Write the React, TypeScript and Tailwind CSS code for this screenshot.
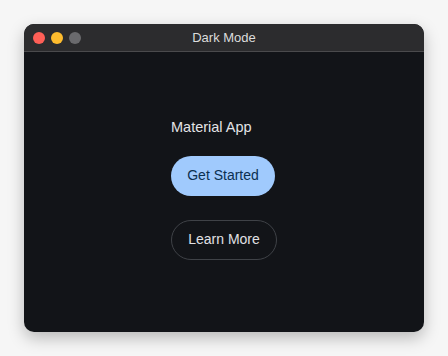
import React from 'react';

const App: React.FC = () => {
  return (
    <div className="w-[448px] h-[356px] bg-[#f6f6f6] pt-6 px-6 font-['Liberation_Sans',Arial,sans-serif]">
      <div className="w-[400px] h-[308px] rounded-[10px] overflow-hidden bg-[#121418] shadow-[0_6px_16px_rgba(0,0,0,0.25)] flex flex-col">
        {/* title bar */}
        <div className="relative h-[28px] bg-[#2c2c2e] border-b border-[#4a4a4c] flex items-center justify-center shrink-0">
          <div className="absolute left-[9px] top-[8px] flex gap-[6px]">
            <span className="w-3 h-3 rounded-full bg-[#fe5f57]" />
            <span className="w-3 h-3 rounded-full bg-[#febc2e]" />
            <span className="w-3 h-3 rounded-full bg-[#6a6a6d]" />
          </div>
          <span className="text-[13px] text-[#dcdcdc]">Dark Mode</span>
        </div>

        {/* content */}
        <div className="flex-1 flex items-center justify-center pb-[6px]">
          <div className="flex flex-col items-start">
            <p className="text-[14.5px] leading-4 text-[#e3e3e6] mb-[21px]">Material App</p>
            <button className="h-10 w-[104px] rounded-full bg-[#a0cafd] text-[14px] text-[#0b3050] mb-6">
              Get Started
            </button>
            <button className="h-10 w-[106px] rounded-full border border-[#3f4247] text-[14px] text-[#e0e0e4]">
              Learn More
            </button>
          </div>
        </div>
      </div>
    </div>
  );
};

export default App;
